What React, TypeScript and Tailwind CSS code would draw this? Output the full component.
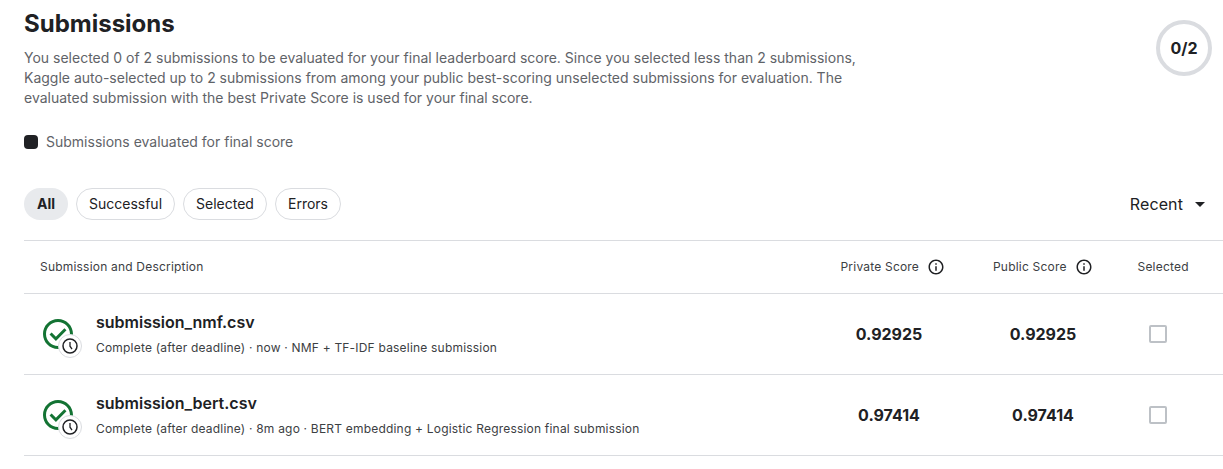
const Info = () => (
  <svg className="size-[18px]" viewBox="0 0 24 24" fill="#202124"><path d="M11 7h2v2h-2zm0 4h2v6h-2zm1-9C6.48 2 2 6.48 2 12s4.48 10 10 10 10-4.48 10-10S17.52 2 12 2zm0 18c-4.41 0-8-3.59-8-8s3.59-8 8-8 8 3.59 8 8-3.59 8-8 8z" /></svg>
);

const Status = () => (
  <div className="relative size-9">
    <svg className="size-9" viewBox="0 0 24 24" fill="#137333"><path d="m10.6 16.6 7.05-7.05-1.4-1.4-5.65 5.65-2.85-2.85-1.4 1.4zM12 2C6.48 2 2 6.48 2 12s4.48 10 10 10 10-4.48 10-10S17.52 2 12 2zm0 18c-4.42 0-8-3.58-8-8s3.58-8 8-8 8 3.58 8 8-3.58 8-8 8z" /></svg>
    <span className="absolute left-[18px] top-[18px] flex size-6 items-center justify-center rounded-full border border-[#dadce0] bg-white">
      <svg className="size-[18px]" viewBox="0 0 18 18" fill="none" stroke="#202124"><circle cx="9" cy="9" r="7" strokeWidth="1.5" /><path d="M9 5v4.2l2 3" strokeWidth="1.3" /></svg>
    </span>
  </div>
);

const rows = [
  { name: "submission_nmf.csv", detail: "Complete (after deadline) · now · NMF + TF-IDF baseline submission", score: "0.92925" },
  { name: "submission_bert.csv", detail: "Complete (after deadline) · 8m ago · BERT embedding + Logistic Regression final submission", score: "0.97414" },
];

export default function App() {
  return (
    <main className="h-[469px] overflow-hidden bg-white pl-6 font-['Inter',sans-serif] text-[#202124]">
      <header className="flex h-[108px] justify-between pr-[11px]">
        <div className="pt-2">
          <h1 className="text-2xl font-bold leading-8">Submissions</h1>
          <p className="mt-2 whitespace-nowrap text-sm leading-5 text-[#5f6368]">
            You selected 0 of 2 submissions to be evaluated for your final leaderboard score. Since you selected less than 2 submissions,<br />
            Kaggle auto-selected up to 2 submissions from among your public best-scoring unselected submissions for evaluation. The<br />
            evaluated submission with the best Private Score is used for your final score.
          </p>
        </div>
        <div className="mt-5 flex size-14 items-center justify-center rounded-full border-4 border-[#dadce0] text-base font-bold">0/2</div>
      </header>
      <div className="mt-6 flex h-5 items-center gap-2 text-sm text-[#5f6368]">
        <span className="size-[14px] rounded bg-[#202124]" />Submissions evaluated for final score
      </div>
      <div className="mt-9 flex h-8 items-center justify-between pr-[18px]">
        <div className="flex gap-2 text-sm">
          <button className="h-8 w-11 rounded-full bg-[#e8eaed] font-bold">All</button>
          <button className="h-8 w-[99px] rounded-full border border-[#dadce0]">Successful</button>
          <button className="h-8 w-[84px] rounded-full border border-[#dadce0]">Selected</button>
          <button className="h-8 w-[66px] rounded-full border border-[#dadce0]">Errors</button>
        </div>
        <button className="flex items-center gap-3 text-base tracking-[0.1px]">Recent<svg className="h-[5px] w-[10px]" viewBox="0 0 10 5"><path d="M0 0h10L5 5z" fill="#202124" /></svg></button>
      </div>
      <section className="mt-5 border-t border-[#dadce0]">
        <div className="flex h-[53px] items-center border-b border-[#dadce0] pl-4 text-xs tracking-[0.2px] text-[#3c4043]">
          <span className="w-[800.5px]">Submission and Description</span>
          <span className="flex w-[152.5px] items-center gap-2">Private Score<Info /></span>
          <span className="flex w-[144.5px] items-center gap-2">Public Score<Info /></span>
          <span>Selected</span>
        </div>
        {rows.map((r) => (
          <div key={r.name} className="flex h-[81px] items-center border-b border-[#dadce0] pl-4">
            <Status />
            <div className="ml-5 w-[734px]">
              <div className="text-base font-semibold leading-6">{r.name}</div>
              <div className="mt-1 text-xs leading-5 tracking-[0.2px] text-[#3c4043]">{r.detail}</div>
            </div>
            <div className="w-[118px] text-center text-base font-bold">{r.score}</div>
            <div className="ml-9 w-[118px] text-center text-base font-bold">{r.score}</div>
            <div className="ml-[47px] size-[18px] rounded-[2px] border-2 border-[#bdc1c6]" />
          </div>
        ))}
      </section>
    </main>
  );
}
